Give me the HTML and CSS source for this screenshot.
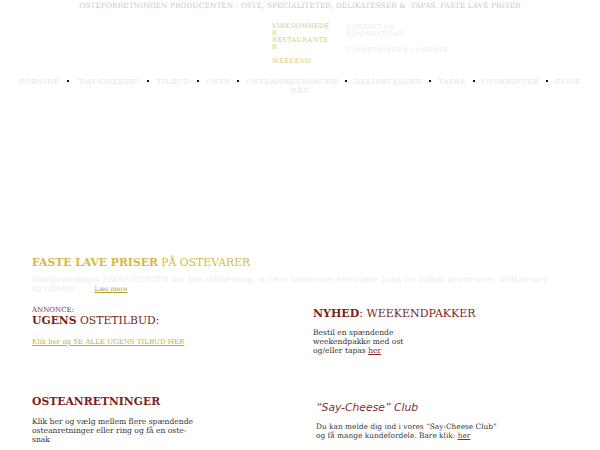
FILE: index.html
```html
<!DOCTYPE html>
<html lang="da">
<head>
<meta charset="utf-8">
<title>Osteforretningen Producenten</title>
<link rel="stylesheet" href="styles.css">
</head>
<body>
<header class="top">
  <h1 class="site-title">OSTEFORRETNINGEN PRODUCENTEN - OSTE, SPECIALITETER, DELIKATESSER &amp;&nbsp; TAPAS. FASTE LAVE PRISER</h1>
  <div class="submenu">
    <ul class="sub-col sub-gold">
      <li>VIRKSOMHEDER</li>
      <li>RESTAURANTER</li>
      <li class="gap">WEEKEND</li>
    </ul>
    <ul class="sub-col sub-light">
      <li>KONTAKT OS</li>
      <li>ÅBNINGSTIDER</li>
      <li class="gap">FORRETNINGEN I ODENSE</li>
    </ul>
  </div>
  <nav class="mainnav">
    <span class="nav-item">FORSIDE</span><span class="dot"></span><span class="nav-item">“SAY-CHEESE”</span><span class="dot"></span><span class="nav-item">TILBUD</span><span class="dot"></span><span class="nav-item">OSTE</span><span class="dot"></span><span class="nav-item">OSTEANRETNINGER</span><span class="dot"></span><span class="nav-item">DELIKATESSER</span><span class="dot"></span><span class="nav-item">TAPAS</span><span class="dot"></span><span class="nav-item">OPSKRIFTER</span><span class="dot"></span><span class="nav-item">GODE RÅD</span>
  </nav>
</header>

<main class="content">
  <section class="intro">
    <h2 class="intro-title"><strong>FASTE LAVE PRISER</strong> PÅ OSTEVARER</h2>
    <p class="intro-text">Osteforretningen PRODUCENTEN har som målsætning, at være fynboernes foretrukne butik for indkøb af ostevarer, delikatesser og tilbehør… <a href="#" class="more">Læs mere</a></p>
  </section>

  <div class="grid">
    <section class="box">
      <div class="kicker">ANNONCE:</div>
      <h3 class="box-title"><strong>UGENS</strong> OSTETILBUD:</h3>
      <p class="box-link"><a href="#">Klik her og SE ALLE UGENS TILBUD HER</a></p>
    </section>
    <section class="box box-right">
      <h3 class="box-title nyhed"><strong>NYHED</strong>: WEEKENDPAKKER</h3>
      <p class="box-text narrow">Bestil en spændende weekendpakke med ost og/eller tapas <a href="#">her</a></p>
    </section>
    <section class="box box-low">
      <h3 class="box-title"><strong>OSTEANRETNINGER</strong></h3>
      <p class="box-text medium">Klik her og vælg mellem flere spændende osteanretninger eller ring og få en oste-snak</p>
    </section>
    <section class="box box-right box-low-right">
      <h3 class="box-title club">“Say-Cheese” Club</h3>
      <p class="box-text club-text">Du kan melde dig ind i vores “Say-Cheese Club”<br>og få mange kundefordele. Bare klik: <a href="#">her</a></p>
    </section>
  </div>
</main>
</body>
</html>
```

FILE: styles.css
```css
* { box-sizing: border-box; }

body {
  margin: 0;
  background: #fff;
  font-family: "DejaVu Serif", serif;
  color: #333;
}

.top {
  display: flex;
  flex-direction: column;
}

.site-title {
  margin: 0;
  padding-top: 1px;
  font-size: 7.3px;
  font-weight: normal;
  line-height: 10px;
  text-align: center;
  color: #c8c8c8;
  letter-spacing: 0.1px;
}

.submenu {
  display: flex;
  gap: 15px;
  padding-left: 272px;
  padding-top: 12px;
}

.sub-col {
  list-style: none;
  margin: 0;
  padding: 0;
  font-size: 6.5px;
  line-height: 7px;
  letter-spacing: 0.35px;
}

.sub-gold {
  width: 59px;
  color: #d9cd6e;
  word-break: break-all;
}

.sub-light {
  color: #ececec;
  padding-top: 1px;
}

.sub-gold .gap { margin-top: 7px; }
.sub-light .gap { margin-top: 9px; }

.mainnav {
  margin: 12px auto 0;
  width: 562px;
  text-align: center;
  font-size: 8px;
  line-height: 9px;
  letter-spacing: 0.2px;
  color: #e6e6e6;
}

.dot {
  display: inline-block;
  width: 2px;
  height: 2px;
  background: #111;
  margin: 0 7px;
  vertical-align: 2px;
}

.content {
  padding: 0 32px;
  margin-top: 161px;
}

.intro-title {
  margin: 0;
  font-size: 10.8px;
  font-weight: normal;
  color: #d4b948;
  line-height: 14px;
}

.intro-title strong { font-weight: bold; }

.intro-text {
  margin: 5px 0 0;
  font-size: 7.8px;
  line-height: 9px;
  color: #ececec;
  padding-right: 15px;
}

.more {
  color: #b89c2c;
  font-size: 6.5px;
  margin-left: 9px;
}

.grid {
  display: grid;
  grid-template-columns: 281px 1fr;
  margin-top: 13px;
}

.kicker {
  font-size: 7px;
  line-height: 7px;
  color: #8b2a2a;
}

.box-title {
  margin: 0;
  font-size: 10.8px;
  line-height: 14px;
  font-weight: normal;
  color: #7d1f1f;
}

.box-title strong { font-weight: bold; }

.nyhed { font-size: 11px; margin-top: 0; }

.club {
  font-family: "DejaVu Sans", sans-serif;
  font-style: italic;
  color: #8b2a2a;
  padding-left: 3px;
}

.box-link {
  margin: 10px 0 0;
  font-size: 7px;
}

.box-link a { color: #c9ad3a; }

.box-text {
  margin: 7px 0 0;
  font-size: 7.6px;
  line-height: 9px;
  color: #333;
}

.box-low .box-text { margin-top: 8px; }

.club-text { padding-left: 3px; font-size: 7.4px; }

.box-text a { color: #8b2a2a; }

.narrow { width: 100px; }
.medium { width: 170px; }

.box-low { margin-top: 40px; }
.box-low-right { margin-top: 46px; }
```
